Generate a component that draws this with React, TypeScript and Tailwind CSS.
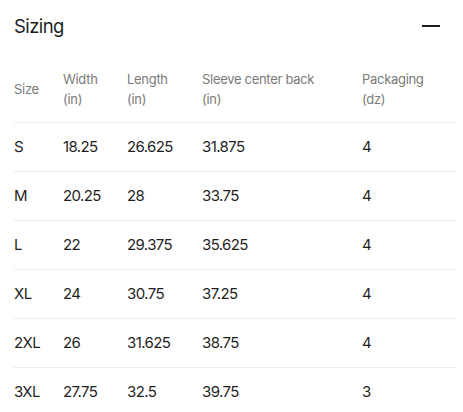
const rows = [
  ['S', '18.25', '26.625', '31.875', '4'],
  ['M', '20.25', '28', '33.75', '4'],
  ['L', '22', '29.375', '35.625', '4'],
  ['XL', '24', '30.75', '37.25', '4'],
  ['2XL', '26', '31.625', '38.75', '4'],
  ['3XL', '27.75', '32.5', '39.75', '3'],
];

const cols = 'grid grid-cols-[49px_64px_75px_160px_1fr] items-center';

export default function App() {
  return (
    <div className="bg-white pl-[14px] pr-[7px] font-['Inter',sans-serif] text-[#1f1f1f]">
      {/* Title */}
      <div className="flex items-center justify-between pt-[12px] pr-[16px]">
        <h2 className="text-[18.5px] leading-[28px] tracking-[-0.6px]">Sizing</h2>
        <div className="w-[18px] h-[2px] bg-[#1f1f1f]" />
      </div>

      {/* Header */}
      <div className={`${cols} mt-[16px] py-[13px] border-b border-[#ececec] text-[13px] leading-[20px] text-[#7a7a7a] tracking-[-0.3px]`}>
        <div>Size</div>
        <div>Width<br />(in)</div>
        <div>Length<br />(in)</div>
        <div>Sleeve center back<br />(in)</div>
        <div>Packaging<br />(dz)</div>
      </div>

      {rows.map((r) => (
        <div key={r[0]} className={`${cols} h-[49px] border-b border-[#ececec] text-[15px] tracking-[-0.6px]`}>
          {r.map((c, i) => (
            <div key={i}>{c}</div>
          ))}
        </div>
      ))}
    </div>
  );
}
